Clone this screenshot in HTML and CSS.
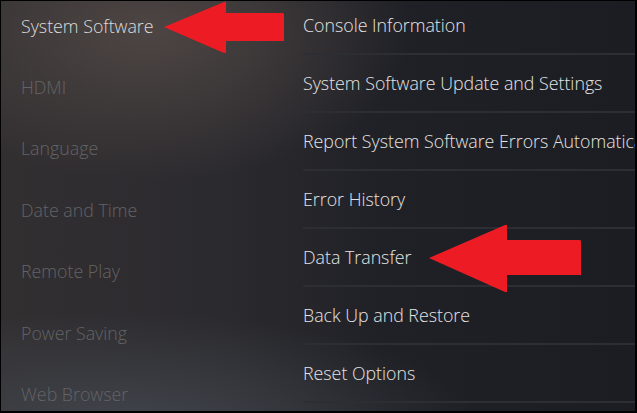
FILE: index.html
```html
<!DOCTYPE html>
<html lang="en">
<head>
  <meta charset="UTF-8">
  <title>Settings - System</title>
  <link rel="stylesheet" href="styles.css">
</head>
<body>

<div class="screen">
  <nav class="side-menu">
    <div class="side-item active">System Software</div>
    <div class="side-item">HDMI</div>
    <div class="side-item">Language</div>
    <div class="side-item">Date and Time</div>
    <div class="side-item">Remote Play</div>
    <div class="side-item">Power Saving</div>
    <div class="side-item">Web Browser</div>
  </nav>

  <main class="options">
    <div class="option">Console Information</div>
    <div class="option">System Software Update and Settings</div>
    <div class="option">Report System Software Errors Automatically</div>
    <div class="option">Error History</div>
    <div class="option">Data Transfer</div>
    <div class="option">Back Up and Restore</div>
    <div class="option">Reset Options</div>
  </main>

  <!-- annotation arrows -->
  <svg class="arrow arrow-top" width="122" height="54" viewBox="0 0 122 54">
    <polygon points="0,25 60,0 62,0 62,11 119,11 120,12 120,39 62,39 62,51 60,51" fill="#ed1c24"/>
  </svg>
  <svg class="arrow arrow-mid" width="155" height="70" viewBox="0 0 155 70">
    <polygon points="0,33 76,0 78,0 78,15 151,15 152,16 152,50 78,50 78,67 76,67" fill="#ed1c24"/>
  </svg>
</div>

</body>
</html>
```

FILE: styles.css
```css
body {
  margin: 0;
  padding: 0;
  background-color: #000;
  font-family: 'Open Sans', 'Noto Sans', sans-serif;
}

.screen {
  position: relative;
  width: 634px;
  height: 410px;
  border-top: 1px solid #000;
  border-left: 1px solid #000;
  border-right: 2px solid #000;
  border-bottom: 2px solid #000;
  overflow: hidden;
  display: grid;
  grid-template-columns: 301px 1fr;
  background:
    radial-gradient(ellipse 260px 150px at 150px 30px, rgba(88, 78, 74, 0.75), rgba(88, 78, 74, 0) 100%),
    radial-gradient(ellipse 360px 120px at 120px 430px, rgba(70, 76, 84, 0.8), rgba(70, 76, 84, 0) 100%),
    linear-gradient(90deg, #322f31 0%, #2b2a2e 35%, #202127 60%, #1c1d23 100%);
}

.side-menu {
  margin-top: -6px;
  padding-left: 20px;
}

.side-item {
  height: 61.4px;
  display: flex;
  align-items: center;
  font-size: 17.8px;
  font-weight: 300;
  color: #636366;
  white-space: nowrap;
}

.side-item.active {
  color: #dcdcdc;
}

.options {
  margin-top: -4px;
  padding-left: 1px;
}

.option {
  height: 56px;
  display: flex;
  align-items: center;
  border-bottom: 2px solid #2d2e34;
  font-size: 17.8px;
  font-weight: 300;
  color: #e4e4e4;
  white-space: nowrap;
}

.arrow {
  position: absolute;
}

.arrow-top {
  left: 163px;
  top: 1px;
}

.arrow-mid {
  left: 428px;
  top: 224px;
}
```
